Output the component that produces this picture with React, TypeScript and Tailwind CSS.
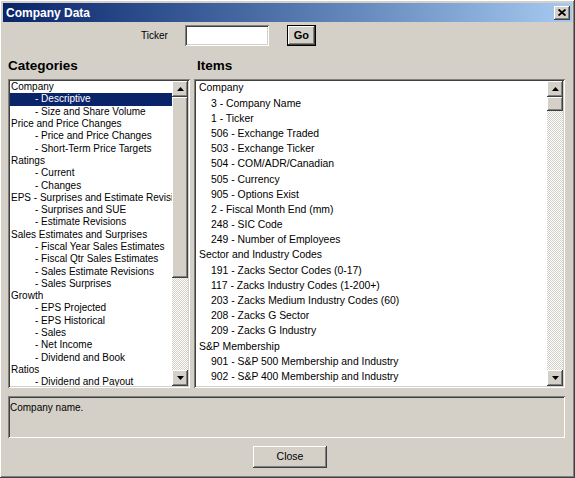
import React from 'react';

const raised =
  'shadow-[inset_-1px_-1px_#404040,inset_1px_1px_#ffffff,inset_-2px_-2px_#808080,inset_2px_2px_#d4d0c8]';
const sunken =
  'shadow-[inset_1px_1px_#808080,inset_-1px_-1px_#ffffff,inset_2px_2px_#404040,inset_-2px_-2px_#d4d0c8]';
const track =
  'bg-[repeating-conic-gradient(#ffffff_0_25%,#d4d0c8_0_50%)] bg-[length:2px_2px]';

type Row = { text: string; sub?: boolean; selected?: boolean };

const CATEGORIES: Row[] = [
  { text: 'Company' },
  { text: '- Descriptive', sub: true, selected: true },
  { text: '- Size and Share Volume', sub: true },
  { text: 'Price and Price Changes' },
  { text: '- Price and Price Changes', sub: true },
  { text: '- Short-Term Price Targets', sub: true },
  { text: 'Ratings' },
  { text: '- Current', sub: true },
  { text: '- Changes', sub: true },
  { text: 'EPS -  Surprises and Estimate Revisions' },
  { text: '- Surprises and SUE', sub: true },
  { text: '- Estimate Revisions', sub: true },
  { text: 'Sales Estimates and Surprises' },
  { text: '- Fiscal Year Sales Estimates', sub: true },
  { text: '- Fiscal Qtr Sales Estimates', sub: true },
  { text: '- Sales Estimate Revisions', sub: true },
  { text: '- Sales Surprises', sub: true },
  { text: 'Growth' },
  { text: '- EPS Projected', sub: true },
  { text: '- EPS Historical', sub: true },
  { text: '- Sales', sub: true },
  { text: '- Net Income', sub: true },
  { text: '- Dividend and Book', sub: true },
  { text: 'Ratios' },
  { text: '- Dividend and Payout', sub: true },
];

const ITEMS: Row[] = [
  { text: 'Company' },
  { text: '3 - Company Name', sub: true },
  { text: '1 - Ticker', sub: true },
  { text: '506 - Exchange Traded', sub: true },
  { text: '503 - Exchange Ticker', sub: true },
  { text: '504 - COM/ADR/Canadian', sub: true },
  { text: '505 - Currency', sub: true },
  { text: '905 - Options Exist', sub: true },
  { text: '2 - Fiscal Month End (mm)', sub: true },
  { text: '248 - SIC Code', sub: true },
  { text: '249 - Number of Employees', sub: true },
  { text: 'Sector and Industry Codes' },
  { text: '191 - Zacks Sector Codes (0-17)', sub: true },
  { text: '117 - Zacks Industry Codes (1-200+)', sub: true },
  { text: '203 - Zacks Medium Industry Codes (60)', sub: true },
  { text: '208 - Zacks G Sector', sub: true },
  { text: '209 - Zacks G Industry', sub: true },
  { text: 'S&P Membership' },
  { text: '901 - S&P 500 Membership and Industry', sub: true },
  { text: '902 - S&P 400 Membership and Industry', sub: true },
];

function Arrow({ down }: { down?: boolean }) {
  return (
    <svg width="7" height="4" viewBox="0 0 7 4">
      <path d={down ? 'M0 0H7L3.5 4Z' : 'M0 4H7L3.5 0Z'} fill="#000" />
    </svg>
  );
}

function ScrollBar({ thumb }: { thumb: number }) {
  return (
    <div className="flex w-[16px] flex-col">
      <div className={`flex h-[16px] items-center justify-center bg-[#d4d0c8] ${raised}`}>
        <Arrow />
      </div>
      <div className={`flex flex-1 flex-col ${track}`}>
        <div className={`bg-[#d4d0c8] ${raised}`} style={{ height: thumb }} />
      </div>
      <div className={`flex h-[16px] items-center justify-center bg-[#d4d0c8] ${raised}`}>
        <Arrow down />
      </div>
    </div>
  );
}

export default function App() {
  return (
    <div
      className={`flex h-[478px] w-[575px] flex-col bg-[#d4d0c8] p-[3px] text-black ${raised}`}
      style={{ fontFamily: '"Liberation Sans", Arial, sans-serif' }}
    >
      {/* Title bar */}
      <div className="flex h-[19px] items-center justify-between bg-gradient-to-r from-[#0a246a] to-[#a6caf0] pl-[3px] pr-[2px]">
        <span className="text-[12px] font-bold text-white">Company Data</span>
        <div className={`flex h-[14px] w-[16px] items-center justify-center bg-[#d4d0c8] ${raised}`}>
          <svg width="8" height="7" viewBox="0 0 8 7">
            <path d="M0.5 0.5L7.5 6.5M7.5 0.5L0.5 6.5" stroke="#000" strokeWidth="1.8" />
          </svg>
        </div>
      </div>

      <div className="flex flex-1 flex-col pl-[5px] pr-[7px]">
        {/* Ticker row */}
        <div className="mt-[3px] flex h-[21px] items-center pl-[133px]">
          <span className="text-[10px]">Ticker</span>
          <div className={`ml-[17px] h-[21px] w-[84px] bg-white ${sunken}`} />
          <div className="ml-[18px] h-[21px] w-[29px] border border-black">
            <div className={`flex h-full w-full items-center justify-center bg-[#d4d0c8] text-[11px] font-bold ${raised}`}>
              Go
            </div>
          </div>
        </div>

        {/* Headings */}
        <div className="mt-[12px] flex h-[16px] items-center text-[13.5px] font-bold">
          <span className="w-[189px]">Categories</span>
          <span>Items</span>
        </div>

        {/* Lists */}
        <div className="mt-[5px] flex h-[309px] gap-[4px]">
          <div className={`flex w-[182px] bg-white p-[2px] ${sunken}`}>
            <div className="flex min-w-0 flex-1 flex-col overflow-hidden text-[10px]">
              {CATEGORIES.map((r, i) => (
                <div
                  key={i}
                  className={`flex h-[12.3px] shrink-0 items-center whitespace-nowrap leading-none ${
                    r.sub ? 'pl-[25px]' : 'pl-[1px]'
                  } ${r.selected ? 'bg-[#0a246a] text-white' : ''}`}
                >
                  {r.text}
                </div>
              ))}
            </div>
            <ScrollBar thumb={181} />
          </div>

          <div className={`flex flex-1 bg-white p-[2px] ${sunken}`}>
            <div className="flex min-w-0 flex-1 flex-col overflow-hidden text-[10.4px]">
              {ITEMS.map((r, i) => (
                <div
                  key={i}
                  className={`flex h-[15.2px] shrink-0 items-center whitespace-nowrap leading-none ${
                    r.sub ? 'pl-[15px]' : 'pl-[3px]'
                  }`}
                >
                  {r.text}
                </div>
              ))}
            </div>
            <ScrollBar thumb={14} />
          </div>
        </div>

        {/* Status box */}
        <div className={`mt-[8px] h-[42px] px-[2px] pt-[4px] text-[10px] ${sunken}`}>Company name.</div>

        {/* Close */}
        <div className="mt-[8px] flex pl-[245px]">
          <div className={`flex h-[22px] w-[74px] items-center justify-center bg-[#d4d0c8] text-[10.5px] ${raised}`}>
            Close
          </div>
        </div>
      </div>
    </div>
  );
}
